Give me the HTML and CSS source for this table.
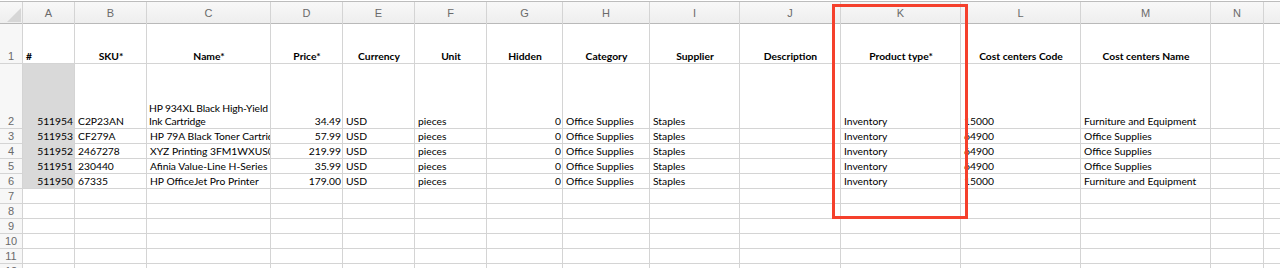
FILE: index.html
```html
<!DOCTYPE html>
<html>
<head>
<meta charset="utf-8">
<link rel="stylesheet" href="styles.css">
</head>
<body>
<div class="sheet">
  <div class="grid">
    <div class="hd corner"><svg class="tri" width="16" height="16" viewBox="0 0 16 16"><polygon points="15,1 15,15 1,15" fill="#d6d6d6"/></svg></div>
    <div class="hd">A</div><div class="hd">B</div><div class="hd">C</div><div class="hd">D</div><div class="hd">E</div><div class="hd">F</div><div class="hd">G</div><div class="hd">H</div><div class="hd">I</div><div class="hd">J</div><div class="hd">K</div><div class="hd">L</div><div class="hd">M</div><div class="hd">N</div><div class="hd"></div>

    <div class="rn">1</div>
    <div class="c b">#</div><div class="c b ctr">SKU*</div><div class="c b ctr">Name*</div><div class="c b ctr">Price*</div><div class="c b ctr">Currency</div><div class="c b ctr">Unit</div><div class="c b ctr">Hidden</div><div class="c b ctr">Category</div><div class="c b ctr">Supplier</div><div class="c b ctr">Description</div><div class="c b ctr">Product type*</div><div class="c b ctr">Cost centers Code</div><div class="c b ctr">Cost centers Name</div><div class="c"></div><div class="c"></div>

    <div class="rn">2</div>
    <div class="c r fill">511954</div><div class="c">C2P23AN</div><div class="c wrap">HP 934XL Black High-Yield Ink Cartridge</div><div class="c r">34.49</div><div class="c">USD</div><div class="c">pieces</div><div class="c r">0</div><div class="c">Office Supplies</div><div class="c">Staples</div><div class="c"></div><div class="c">Inventory</div><div class="c">15000</div><div class="c">Furniture and Equipment</div><div class="c"></div><div class="c"></div>

    <div class="rn">3</div>
    <div class="c r fill">511953</div><div class="c">CF279A</div><div class="c">HP 79A Black Toner Cartridge</div><div class="c r">57.99</div><div class="c">USD</div><div class="c">pieces</div><div class="c r">0</div><div class="c">Office Supplies</div><div class="c">Staples</div><div class="c"></div><div class="c">Inventory</div><div class="c">64900</div><div class="c">Office Supplies</div><div class="c"></div><div class="c"></div>

    <div class="rn">4</div>
    <div class="c r fill">511952</div><div class="c">2467278</div><div class="c">XYZ Printing 3FM1WXUS00A</div><div class="c r">219.99</div><div class="c">USD</div><div class="c">pieces</div><div class="c r">0</div><div class="c">Office Supplies</div><div class="c">Staples</div><div class="c"></div><div class="c">Inventory</div><div class="c">64900</div><div class="c">Office Supplies</div><div class="c"></div><div class="c"></div>

    <div class="rn">5</div>
    <div class="c r fill">511951</div><div class="c">230440</div><div class="c">Afinia Value-Line H-Series 1.75mm</div><div class="c r">35.99</div><div class="c">USD</div><div class="c">pieces</div><div class="c r">0</div><div class="c">Office Supplies</div><div class="c">Staples</div><div class="c"></div><div class="c">Inventory</div><div class="c">64900</div><div class="c">Office Supplies</div><div class="c"></div><div class="c"></div>

    <div class="rn">6</div>
    <div class="c r fill last">511950</div><div class="c">67335</div><div class="c">HP OfficeJet Pro Printer</div><div class="c r">179.00</div><div class="c">USD</div><div class="c">pieces</div><div class="c r">0</div><div class="c">Office Supplies</div><div class="c">Staples</div><div class="c"></div><div class="c">Inventory</div><div class="c">15000</div><div class="c">Furniture and Equipment</div><div class="c"></div><div class="c"></div>

    <div class="rn">7</div><div class="c"></div><div class="c"></div><div class="c"></div><div class="c"></div><div class="c"></div><div class="c"></div><div class="c"></div><div class="c"></div><div class="c"></div><div class="c"></div><div class="c"></div><div class="c"></div><div class="c"></div><div class="c"></div><div class="c"></div>
    <div class="rn">8</div><div class="c"></div><div class="c"></div><div class="c"></div><div class="c"></div><div class="c"></div><div class="c"></div><div class="c"></div><div class="c"></div><div class="c"></div><div class="c"></div><div class="c"></div><div class="c"></div><div class="c"></div><div class="c"></div><div class="c"></div>
    <div class="rn">9</div><div class="c"></div><div class="c"></div><div class="c"></div><div class="c"></div><div class="c"></div><div class="c"></div><div class="c"></div><div class="c"></div><div class="c"></div><div class="c"></div><div class="c"></div><div class="c"></div><div class="c"></div><div class="c"></div><div class="c"></div>
    <div class="rn">10</div><div class="c"></div><div class="c"></div><div class="c"></div><div class="c"></div><div class="c"></div><div class="c"></div><div class="c"></div><div class="c"></div><div class="c"></div><div class="c"></div><div class="c"></div><div class="c"></div><div class="c"></div><div class="c"></div><div class="c"></div>
    <div class="rn">11</div><div class="c"></div><div class="c"></div><div class="c"></div><div class="c"></div><div class="c"></div><div class="c"></div><div class="c"></div><div class="c"></div><div class="c"></div><div class="c"></div><div class="c"></div><div class="c"></div><div class="c"></div><div class="c"></div><div class="c"></div>
    <div class="rn">12</div><div class="c"></div><div class="c"></div><div class="c"></div><div class="c"></div><div class="c"></div><div class="c"></div><div class="c"></div><div class="c"></div><div class="c"></div><div class="c"></div><div class="c"></div><div class="c"></div><div class="c"></div><div class="c"></div><div class="c"></div>
  </div>
  <div class="callout"></div>
</div>
</body>
</html>
```
FILE: styles.css
```css
html, body {
  margin: 0;
  padding: 0;
  background: #fff;
}
.sheet {
  position: relative;
  width: 1280px;
  height: 268px;
  overflow: hidden;
  padding-top: 1px;
  box-sizing: border-box;
}
.grid {
  display: grid;
  grid-template-columns: 22px 51px 71px 123px 71px 71px 71px 75px 86px 89px 100px 119px 119px 129px 52px 1fr;
  grid-template-rows: 21px 39px 64px repeat(10, 14px);
  gap: 1px;
  background: #d4d4d4;
  border-top: 1px solid #bcbcbc;
  font-family: Lato, "Open Sans", sans-serif;
  font-size: 10.3px;
  color: #000;
}
.hd {
  background: linear-gradient(#f8f8f8, #eeeeee);
  box-shadow: 0 1px 0 #b9b9b9;
  display: flex;
  align-items: center;
  justify-content: center;
  font-family: "Liberation Sans", Arial, sans-serif;
  font-size: 11px;
  color: #6a6a6a;
  padding-top: 1px;
}
.corner {
  position: relative;
  justify-content: flex-end;
  align-items: flex-end;
  padding: 0;
}
.tri {
  display: block;
}
.rn {
  background: #f7f7f7;
  display: flex;
  align-items: flex-end;
  justify-content: center;
  font-family: "Liberation Sans", Arial, sans-serif;
  font-size: 11px;
  color: #6a6a6a;
  line-height: 14px;
}
.c {
  background: #fff;
  display: flex;
  align-items: flex-end;
  padding: 0 2px 0 3px;
  white-space: nowrap;
  overflow: hidden;
  line-height: 14px;
}
.b {
  font-weight: bold;
}
.ctr {
  justify-content: center;
}
.r {
  justify-content: flex-end;
  padding-right: 1px;
}
.wrap {
  white-space: normal;
  line-height: 13px;
  padding-right: 0;
  padding-left: 2px;
  letter-spacing: -0.15px;
}
.fill {
  background: #d9d9d9;
  box-shadow: 0 1px 0 #d9d9d9;
}
.fill.last {
  box-shadow: none;
}
.callout {
  position: absolute;
  left: 832px;
  top: 4px;
  width: 136px;
  height: 215px;
  box-sizing: border-box;
  border: 3px solid #f5402c;
}
```
